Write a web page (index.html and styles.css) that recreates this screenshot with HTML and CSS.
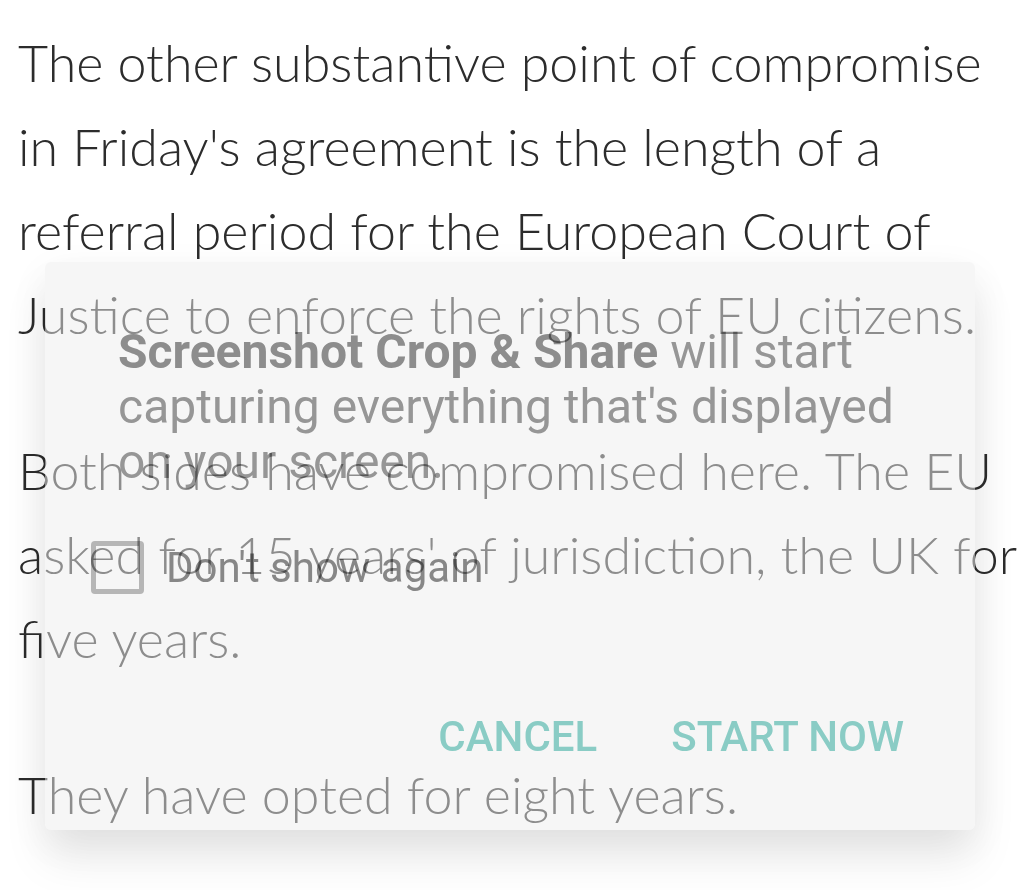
FILE: index.html
```html
<!DOCTYPE html>
<html lang="en">
<head>
<meta charset="utf-8">
<title>Article with dialog</title>
<link rel="stylesheet" href="styles.css">
</head>
<body>
<main class="article">
  <p>The other substantive point of compromise<br>in Friday's agreement is the length of a<br>referral period for the European Court of<br>Justice to enforce the rights of EU citizens.</p>
  <p>Both sides have compromised here. The EU<br>asked for 15 years' of jurisdiction, the UK for<br>five years.</p>
  <p>They have opted for eight years.</p>
</main>

<div class="dialog" role="dialog">
  <div class="dialog-body">
    <p class="message"><b>Screenshot Crop &amp; Share</b> will start capturing everything that's displayed on your screen.</p>
    <label class="check-row">
      <span class="checkbox"></span>
      <span class="check-label">Don't show again</span>
    </label>
    <div class="actions">
      <span class="btn">CANCEL</span>
      <span class="btn">START NOW</span>
    </div>
  </div>
</div>
</body>
</html>
```

FILE: styles.css
```css
html, body {
  margin: 0;
  padding: 0;
  background: #ffffff;
}

body {
  width: 1025px;
  height: 890px;
  overflow: hidden;
}

.article {
  padding: 20px 0 0 18px;
}

.article p {
  margin: 0 0 72px;
  font-family: Lato, "Open Sans", sans-serif;
  font-weight: 300;
  font-size: 52px;
  line-height: 84px;
  color: #2c2c2c;
  white-space: nowrap;
}

.dialog {
  position: absolute;
  left: 45px;
  top: 262px;
  width: 930px;
  height: 568px;
  box-sizing: border-box;
  padding: 62px 71px 68px 46px;
  border-radius: 6px;
  background: rgba(238, 238, 238, 0.5);
  box-shadow: 0 30px 45px rgba(0, 0, 0, 0.08), 0 12px 40px rgba(0, 0, 0, 0.06);
}

.dialog-body {
  display: flex;
  flex-direction: column;
  mix-blend-mode: multiply;
  font-family: Roboto, "Noto Sans", sans-serif;
}

.message {
  margin: 0 0 0 27px;
  width: 786px;
  font-size: 48px;
  line-height: 55px;
  color: #9c9c9c;
}

.message b {
  font-weight: 700;
  color: #929292;
}

.check-row {
  display: flex;
  align-items: center;
  gap: 22px;
  margin-top: 52px;
  height: 53px;
}

.checkbox {
  width: 53px;
  height: 53px;
  box-sizing: border-box;
  border: 5px solid #bdbdbd;
  border-radius: 4px;
}

.check-label {
  font-size: 42px;
  line-height: 53px;
  color: #8c8c8c;
}

.actions {
  display: flex;
  justify-content: flex-end;
  gap: 74px;
  margin-top: 118px;
}

.btn {
  font-size: 42px;
  line-height: 50px;
  font-weight: 500;
  color: #8fd4cc;
}
```
